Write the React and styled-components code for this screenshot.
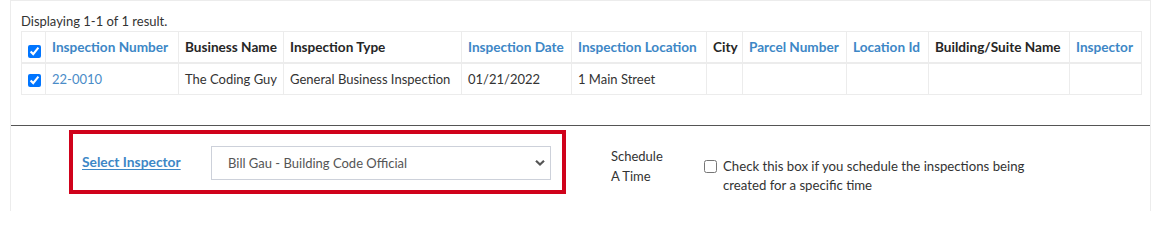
import React from "react";
import styled, { createGlobalStyle } from "styled-components";

const GlobalStyle = createGlobalStyle`
	body {
		margin: 0;
		background: #fff;
		font-family: Lato, "Open Sans", sans-serif;
		color: #333;
	}
`;

const Panel = styled.div`
	margin-left: 10px;
	width: 1141px;
	min-height: 211px;
	box-sizing: border-box;
	border: 1px solid #ececec;
	border-bottom: none;
`;

const ResultsSection = styled.div`
	padding: 10px 9px 30px 10px;
`;

const Summary = styled.div`
	font-size: 13px;
	line-height: 20px;
	color: #333;
`;

const Table = styled.table`
	width: 1120px;
	table-layout: fixed;
	border-collapse: collapse;
	border: 1px solid #ececec;
	font-size: 13px;
	line-height: 20px;
`;

const Th = styled.th`
	width: ${(p) => p.$w}px;
	box-sizing: border-box;
	padding: 5px 6px;
	border: 1px solid #ececec;
	border-bottom-width: 2px;
	text-align: left;
	font-size: 13.6px;
	font-weight: 700;
	white-space: nowrap;
	color: ${(p) => (p.$link ? "#3d87c6" : "#262626")};
`;

const Td = styled.td`
	padding: 5px 6px;
	border: 1px solid #ececec;
	white-space: nowrap;
	color: #333;
`;

const CheckCell = styled.td`
	width: ${(p) => p.$w || 24}px;
	box-sizing: border-box;
	padding: ${(p) => (p.$head ? "8px 0 2px 6px" : "5px 0 5px 6px")};
	border: 1px solid #ececec;
	border-bottom-width: ${(p) => (p.$head ? 2 : 1)}px;
	text-align: left;
`;

const RowCheck = styled.input`
	width: 13px;
	height: 13px;
	margin: 0;
	vertical-align: middle;
`;

const CellLink = styled.a`
	color: #4a8cc8;
	text-decoration: none;
`;

const Divider = styled.div`
	height: 1px;
	background: #555;
`;

const BottomSection = styled.div`
	display: flex;
	align-items: flex-start;
	padding: 4px 0 16px 58px;
`;

const HighlightBox = styled.div`
	width: 497px;
	box-sizing: border-box;
	display: flex;
	align-items: center;
	border: 4px solid #d0021b;
	padding: 12px 11px 10px 9px;
`;

const FieldLabel = styled.a`
	width: 129px;
	font-size: 13.8px;
	line-height: 20px;
	font-weight: 700;
	color: #3d87c6;
	text-decoration: underline;
	text-underline-offset: 2px;
	margin-top: -2px;
`;

const SelectWrap = styled.div`
	position: relative;
	width: 340px;
`;

const Select = styled.select`
	appearance: none;
	width: 100%;
	height: 34px;
	box-sizing: border-box;
	margin: 0;
	padding: 0 30px 0 16px;
	border: 1px solid #cdd1da;
	border-radius: 0;
	background: #fff;
	font-family: Lato, "Open Sans", sans-serif;
	font-size: 13px;
	color: #555;
`;

const Chevron = styled.svg`
	position: absolute;
	right: 6px;
	top: 50%;
	transform: translateY(-50%);
	pointer-events: none;
`;

const ScheduleLabel = styled.div`
	width: 58px;
	margin: 16px 0 0 45px;
	font-size: 13px;
	line-height: 20px;
	color: #333;
`;

const CheckGroup = styled.label`
	display: flex;
	align-items: flex-start;
	gap: 6px;
	margin: 27px 0 0 35px;
`;

const BoxCheck = styled.input`
	width: 13px;
	height: 13px;
	margin: 3px 0 0 0;
	flex-shrink: 0;
`;

const CheckText = styled.span`
	width: 320px;
	font-size: 13.2px;
	line-height: 19px;
	color: #333;
`;

const columns = [
	{ label: "Inspection Number", w: 133, link: true },
	{ label: "Business Name", w: 105 },
	{ label: "Inspection Type", w: 178 },
	{ label: "Inspection Date", w: 110, link: true },
	{ label: "Inspection Location", w: 135, link: true },
	{ label: "City", w: 36 },
	{ label: "Parcel Number", w: 104, link: true },
	{ label: "Location Id", w: 82, link: true },
	{ label: "Building/Suite Name", w: 141 },
	{ label: "Inspector", w: 72, link: true },
];

const row = ["The Coding Guy", "General Business Inspection", "01/21/2022", "1 Main Street", "", "", "", "", ""];

const App = () => {
	return (
		<>
			<GlobalStyle />
			<Panel>
				<ResultsSection>
					<Summary>Displaying 1-1 of 1 result.</Summary>
					<Table>
						<thead>
							<tr>
								<CheckCell as="th" $head $w={24}>
									<RowCheck type="checkbox" defaultChecked />
								</CheckCell>
								{columns.map((c) => (
									<Th key={c.label} $w={c.w} $link={c.link}>
										{c.label}
									</Th>
								))}
							</tr>
						</thead>
						<tbody>
							<tr>
								<CheckCell>
									<RowCheck type="checkbox" defaultChecked />
								</CheckCell>
								<Td>
									<CellLink href="#">22-0010</CellLink>
								</Td>
								{row.map((v, i) => (
									<Td key={i}>{v}</Td>
								))}
							</tr>
						</tbody>
					</Table>
				</ResultsSection>
				<Divider />
				<BottomSection>
					<HighlightBox>
						<FieldLabel href="#">Select Inspector</FieldLabel>
						<SelectWrap>
							<Select defaultValue="bill">
								<option value="bill">Bill Gau - Building Code Official</option>
							</Select>
							<Chevron width="10" height="7" viewBox="0 0 10 7">
								<polyline points="1,1.2 5,5 9,1.2" fill="none" stroke="#555" strokeWidth="2.2" />
							</Chevron>
						</SelectWrap>
					</HighlightBox>
					<ScheduleLabel>Schedule A Time</ScheduleLabel>
					<CheckGroup>
						<BoxCheck type="checkbox" />
						<CheckText>Check this box if you schedule the inspections being created for a specific time</CheckText>
					</CheckGroup>
				</BottomSection>
			</Panel>
		</>
	);
};

export default App;
